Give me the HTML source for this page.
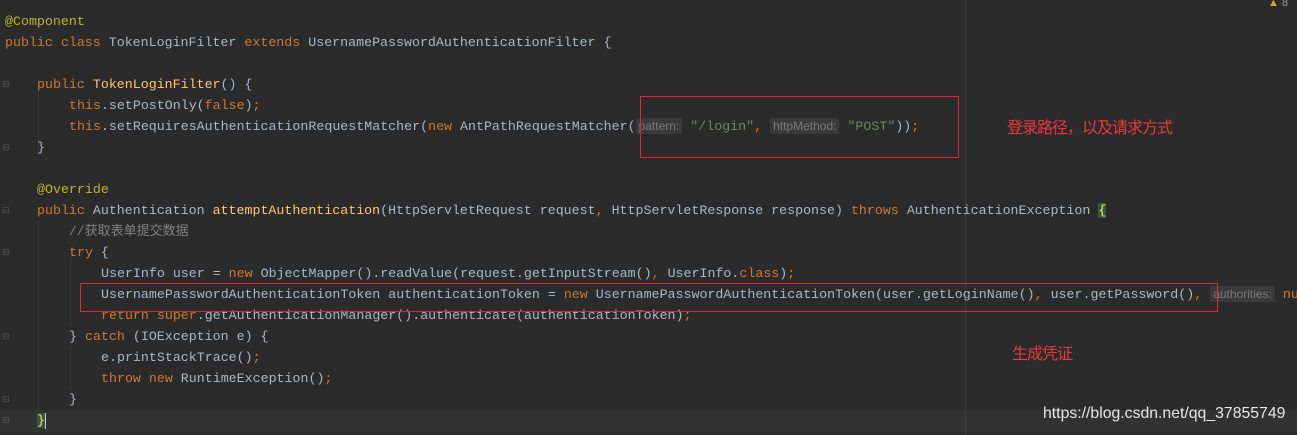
<!DOCTYPE html>
<html><head><meta charset="utf-8"><style>
body{margin:0;width:1297px;height:435px;background:#2b2b2b;overflow:hidden;position:relative;font-family:"Liberation Mono",monospace}
.l{position:absolute;height:21px;line-height:21px;font-size:13.3px;color:#a9b7c6;white-space:pre}
.k{color:#cc7832}.a{color:#bbb529}.m{color:#ffc66d}.s{color:#6a8759}.c{color:#808080;font-family:"Liberation Mono","Noto Sans CJK SC",monospace;font-size:13px}
.h{background:#3a3a3a;color:#7a7a7a;font-family:"Liberation Sans",sans-serif;font-size:12px;padding:1px 3px;border-radius:2px}
.box{position:absolute;border:1px solid #e8222e}
.note{position:absolute;color:#e8383d;font-family:"Noto Sans CJK SC",sans-serif;font-size:16px;letter-spacing:-1px}
.g{position:absolute;left:2px;color:#555;font-size:9px}
</style></head><body>
<div style="position:absolute;left:0;top:410px;width:1297px;height:22px;background:#323232"></div>
<div style="position:absolute;left:965px;top:0;width:1px;height:435px;background:#3c3c3c"></div>
<div style="position:absolute;left:38px;top:95px;width:1px;height:60px;background:#373737"></div>
<div style="position:absolute;left:38px;top:220px;width:1px;height:190px;background:#373737"></div>
<div style="position:absolute;left:70px;top:262px;width:1px;height:64px;background:#373737"></div>
<div style="position:absolute;left:70px;top:346px;width:1px;height:44px;background:#373737"></div>
<div class="g" style="top:80px">⊟</div><div class="g" style="top:143px">⊟</div><div class="g" style="top:206px">⊟</div>
<div class="g" style="top:248px">⊟</div><div class="g" style="top:332px">⊟</div><div class="g" style="top:395px">⊟</div><div class="g" style="top:416px">⊟</div>

<div class="l" style="left:5px;top:11px"><span class="a">@Component</span></div>
<div class="l" style="left:5px;top:32px"><span class="k">public class </span>TokenLoginFilter <span class="k">extends </span>UsernamePasswordAuthenticationFilter {</div>
<div class="l" style="left:37px;top:74px"><span class="k">public </span><span class="m">TokenLoginFilter</span>() {</div>
<div class="l" style="left:69px;top:95px"><span class="k">this</span>.setPostOnly(<span class="k">false</span>)<span class="k">;</span></div>
<div class="l" style="left:69px;top:116px"><span class="k">this</span>.setRequiresAuthenticationRequestMatcher(<span class="k">new </span>AntPathRequestMatcher(<span class="h">pattern:</span> <span class="s">"/login"</span><span class="k">, </span><span class="h">httpMethod:</span> <span class="s">"POST"</span>))<span class="k">;</span></div>
<div class="l" style="left:37px;top:137px">}</div>
<div class="l" style="left:37px;top:179px"><span class="a">@Override</span></div>
<div class="l" style="left:37px;top:200px"><span class="k">public </span>Authentication <span class="m">attemptAuthentication</span>(HttpServletRequest request<span class="k">, </span>HttpServletResponse response) <span class="k">throws </span>AuthenticationException <span style="color:#ffef28;background:#3b514d">{</span></div>
<div class="l" style="left:69px;top:221px"><span class="c">//获取表单提交数据</span></div>
<div class="l" style="left:69px;top:242px"><span class="k">try </span>{</div>
<div class="l" style="left:101px;top:263px">UserInfo user = <span class="k">new </span>ObjectMapper().readValue(request.getInputStream()<span class="k">, </span>UserInfo.<span class="k">class</span>)<span class="k">;</span></div>
<div class="l" style="left:101px;top:284px">UsernamePasswordAuthenticationToken authenticationToken = <span class="k">new </span>UsernamePasswordAuthenticationToken(user.getLoginName()<span class="k">, </span>user.getPassword()<span class="k">, </span><span class="h">authorities:</span> <span class="k">null</span></div>
<div class="l" style="left:101px;top:305px"><span class="k">return super</span>.getAuthenticationManager().authenticate(authenticationToken)<span class="k">;</span></div>
<div class="l" style="left:69px;top:326px">} <span class="k">catch </span>(IOException e) {</div>
<div class="l" style="left:101px;top:347px">e.printStackTrace()<span class="k">;</span></div>
<div class="l" style="left:101px;top:368px"><span class="k">throw new </span>RuntimeException()<span class="k">;</span></div>
<div class="l" style="left:69px;top:389px">}</div>
<div class="l" style="left:37px;top:410px"><span style="color:#ffef28;background:#3b514d">}</span></div>
<div style="position:absolute;left:45px;top:413px;width:1px;height:16px;background:#ccc"></div>

<div class="box" style="left:640px;top:96px;width:317px;height:60px"></div>
<div class="box" style="left:80px;top:283px;width:1136px;height:27px"></div>
<div class="note" style="left:1007px;top:114px">登录路径，以及请求方式</div>
<div class="note" style="left:1012px;top:340px">生成凭证</div>
<div style="position:absolute;left:1043px;top:405px;color:#e6e6e6;font-family:'Liberation Sans',sans-serif;font-size:15.8px">https://blog.csdn.net/qq_37855749</div>
<div style="position:absolute;left:1268px;top:-3px;font-family:'Liberation Sans',sans-serif;font-size:11px;color:#999"><span style="color:#e0a020">▲</span> 8</div>
</body></html>
